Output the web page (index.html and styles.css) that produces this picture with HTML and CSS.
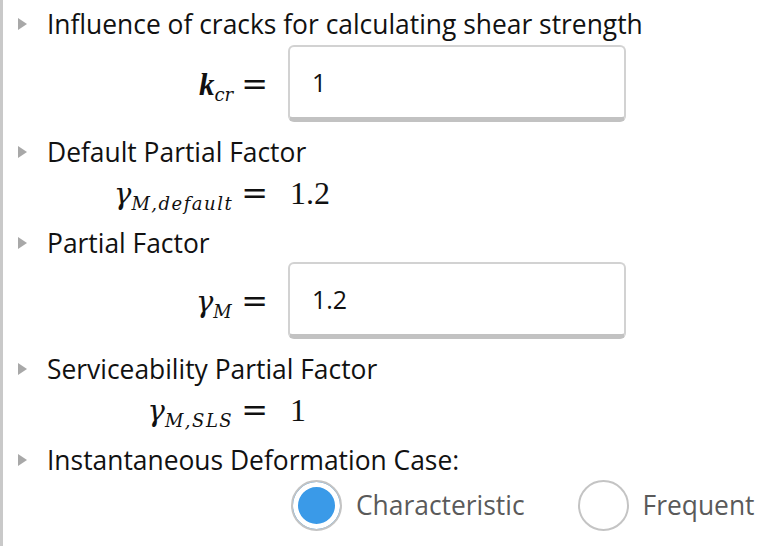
FILE: index.html
```html
<!DOCTYPE html>
<html>
<head>
<meta charset="utf-8">
<link rel="stylesheet" href="styles.css">
</head>
<body>
<div class="panel">
  <div class="heading"><span class="caret"></span><span>Influence of cracks for calculating shear strength</span></div>
  <div class="field field-input first">
    <div class="lhs"><span class="mi bold">k</span><sub class="sub tight">cr</sub><span class="eq">=</span></div>
    <div class="box">1</div>
  </div>
  <div class="heading"><span class="caret"></span><span>Default Partial Factor</span></div>
  <div class="field field-eq">
    <div class="lhs"><span class="mi gamma">γ</span><sub class="sub">M,default</sub><span class="eq">=</span></div>
    <div class="val">1.2</div>
  </div>
  <div class="heading"><span class="caret"></span><span>Partial Factor</span></div>
  <div class="field field-input second">
    <div class="lhs"><span class="mi gamma">γ</span><sub class="sub">M</sub><span class="eq">=</span></div>
    <div class="box">1.2</div>
  </div>
  <div class="heading"><span class="caret"></span><span>Serviceability Partial Factor</span></div>
  <div class="field field-eq">
    <div class="lhs"><span class="mi gamma">γ</span><sub class="sub">M,SLS</sub><span class="eq">=</span></div>
    <div class="val">1</div>
  </div>
  <div class="heading last"><span class="caret"></span><span>Instantaneous Deformation Case:</span></div>
  <div class="radios">
    <label class="radio"><span class="dot checked"></span><span>Characteristic</span></label>
    <label class="radio"><span class="dot"></span><span>Frequent</span></label>
  </div>
</div>
</body>
</html>
```
FILE: styles.css
```css
html, body { margin: 0; padding: 0; background: #fff; }
body { width: 770px; height: 546px; overflow: hidden; font-family: "Open Sans", sans-serif; color: #111; }
.panel {
  border-left: 3px solid #c9c9c9;
  height: 546px;
  box-sizing: border-box;
  padding-top: 7px;
}
.heading {
  display: flex;
  align-items: center;
  height: 34px;
  font-size: 26.4px;
  color: #111;
}
.heading.last { margin-top: 1px; }
.caret {
  width: 0; height: 0;
  border-top: 6px solid transparent;
  border-bottom: 6px solid transparent;
  border-left: 9px solid #a8a8a8;
  margin-left: 15px;
  margin-right: 20px;
}
.field {
  display: grid;
  grid-template-columns: 285px auto;
  align-items: center;
}
.field-input { height: 77px; margin-bottom: 13px; }
.field-input.first { margin-top: 4px; }
.field-input.second { margin-top: 2px; }
.field-eq { margin-top: 5px; height: 36px; margin-bottom: 16px; }
.lhs {
  display: flex;
  justify-content: flex-end;
  align-items: baseline;
  font-family: "Liberation Serif", serif;
  font-size: 31px;
  color: #111;
  padding-right: 20px;
}
.mi { font-style: italic; }
.gamma { font-family: "DejaVu Serif", serif; font-size: 29px; }
.bold { font-weight: bold; }
.sub { font-family: "DejaVu Serif", serif; font-style: italic; font-size: 18px; letter-spacing: 1.5px; vertical-align: baseline; position: relative; top: 6px; }
.sub.tight { letter-spacing: 0; }
.eq { font-family: "DejaVu Serif", serif; font-size: 32px; margin-left: 8px; }
.box {
  box-sizing: border-box;
  width: 338px;
  height: 77px;
  border: 2px solid #d2d2d2;
  border-bottom: 5px solid #c2c2c2;
  border-radius: 6px;
  display: flex;
  align-items: center;
  padding-left: 22px;
  font-size: 25px;
  color: #111;
}
.val { font-family: "Liberation Serif", serif; font-size: 32px; padding-left: 2px; }
.radios {
  display: flex;
  align-items: center;
  margin-top: 3px;
  padding-left: 288px;
  height: 50px;
}
.radio {
  display: flex;
  align-items: center;
  font-size: 26.4px;
  color: #5a5a5a;
  margin-right: 53px;
}
.dot {
  box-sizing: border-box;
  width: 51px; height: 51px;
  border-radius: 50%;
  border: 2px solid #c4c4c4;
  margin-right: 14px;
  background: #fff;
}
.dot.checked {
  background: #3a9ae8;
  box-shadow: inset 0 0 0 5px #fff;
}
```
